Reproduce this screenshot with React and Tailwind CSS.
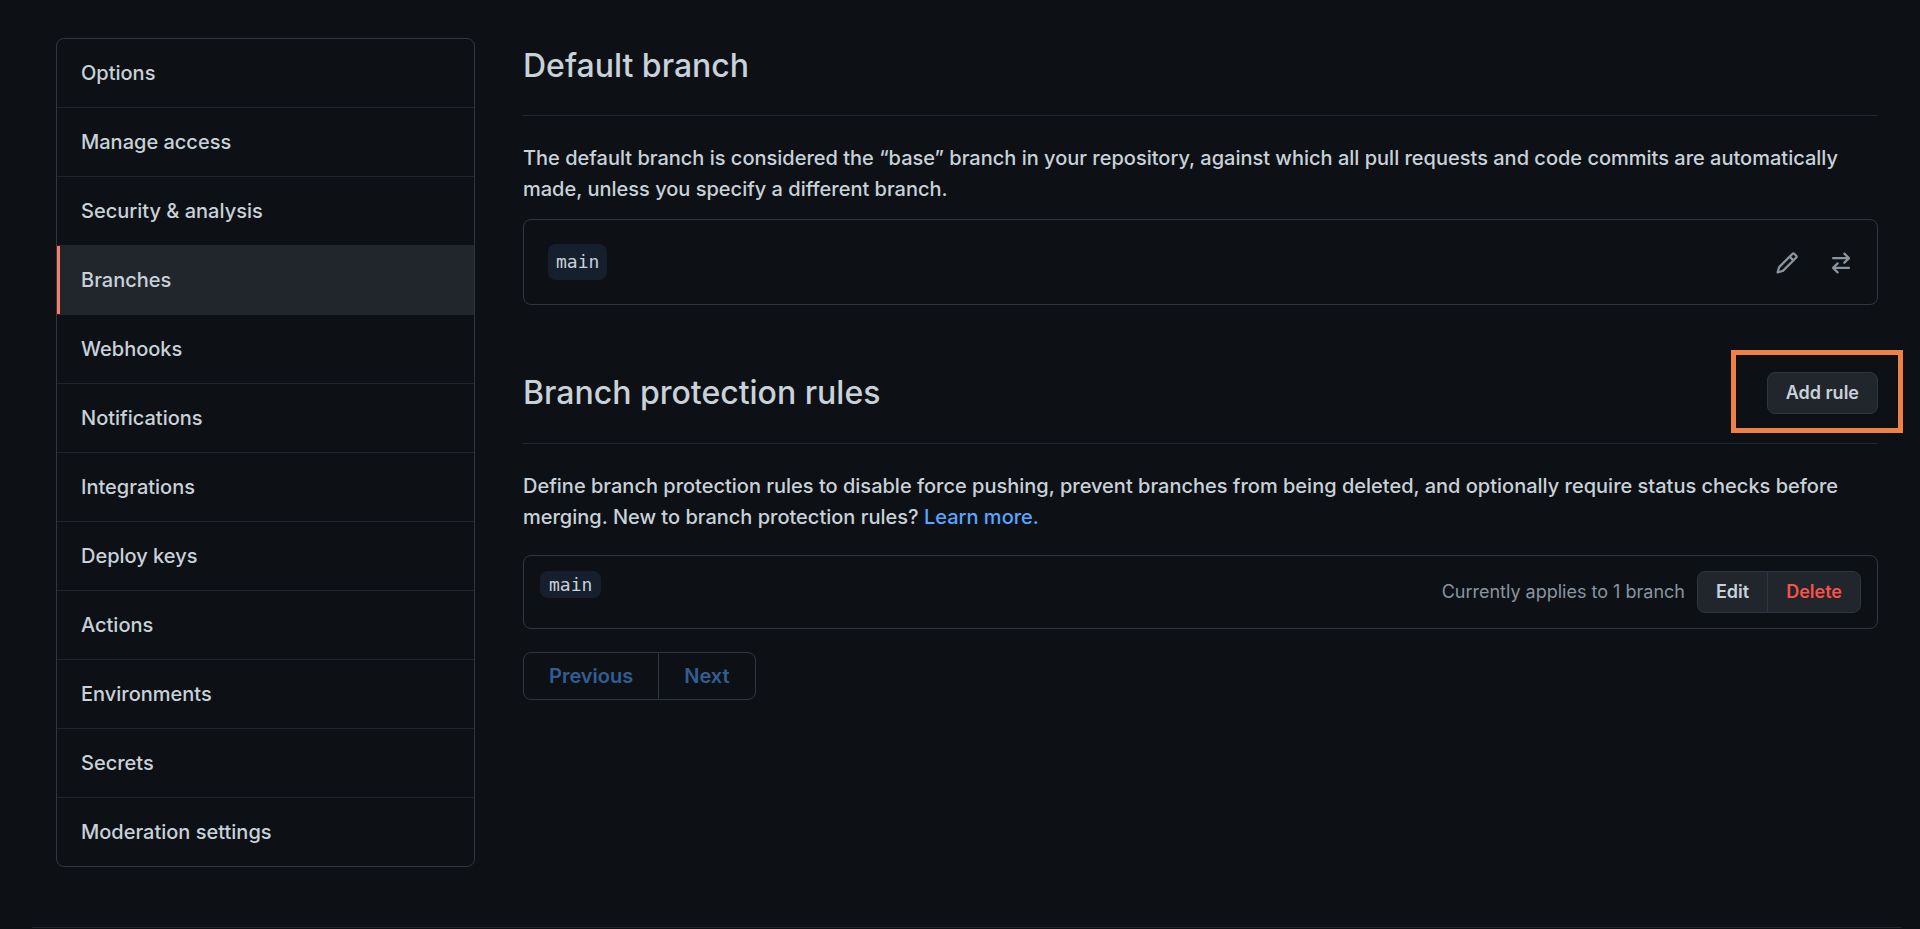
const navItems = [
  "Options",
  "Manage access",
  "Security & analysis",
  "Branches",
  "Webhooks",
  "Notifications",
  "Integrations",
  "Deploy keys",
  "Actions",
  "Environments",
  "Secrets",
  "Moderation settings",
];

function PencilIcon() {
  return (
    <svg viewBox="0 0 16 16" className="size-6 fill-current" aria-hidden="true">
      <path
        fillRule="evenodd"
        d="M11.013 1.427a1.75 1.75 0 012.474 0l1.086 1.086a1.75 1.75 0 010 2.474l-8.61 8.61c-.21.21-.47.364-.756.445l-3.251.93a.75.75 0 01-.927-.928l.929-3.25a1.75 1.75 0 01.445-.758l8.61-8.61zm1.414 1.06a.25.25 0 00-.354 0L10.811 3.75l1.439 1.44 1.263-1.263a.25.25 0 000-.354l-1.086-1.086zM11.189 6.25L9.75 4.81l-6.286 6.287a.25.25 0 00-.064.108l-.558 1.953 1.953-.558a.249.249 0 00.108-.064l6.286-6.286z"
      />
    </svg>
  );
}

function SwitchIcon() {
  return (
    <svg viewBox="0 0 16 16" className="size-6 fill-current" aria-hidden="true">
      <path
        fillRule="evenodd"
        d="M5.22 14.78a.75.75 0 001.06-1.06L4.56 12h8.69a.75.75 0 000-1.5H4.56l1.72-1.72a.75.75 0 00-1.06-1.06l-3 3a.75.75 0 000 1.06l3 3zm5.56-6.5a.75.75 0 11-1.06-1.06l1.72-1.72H2.75a.75.75 0 010-1.5h8.69L9.72 2.28a.75.75 0 011.06-1.06l3 3a.75.75 0 010 1.06l-3 3z"
      />
    </svg>
  );
}

function SideNav() {
  return (
    <nav
      aria-label="Repository settings"
      className="w-[419px] shrink-0 self-start overflow-hidden rounded-lg border border-[#30363d]"
    >
      <ul className="divide-y divide-[#21262d]">
        {navItems.map((item) => {
          const current = item === "Branches";
          return (
            <li key={item}>
              <a
                href="#"
                aria-current={current ? "page" : undefined}
                className={
                  current
                    ? "flex h-[68px] items-center border-l-3 border-[#f78166] bg-[#21262d] pr-6 pl-[21px]"
                    : "flex h-[68px] items-center px-6"
                }
              >
                {item}
              </a>
            </li>
          );
        })}
      </ul>
    </nav>
  );
}

export default function App() {
  return (
    <div className="flex min-h-screen flex-col bg-[#0d1115] pr-[18px] pb-0.5 pl-8 font-['Inter',sans-serif] text-xl leading-8 font-medium text-[#c9d1d9]">
      <div className="flex grow gap-12 border-b border-[#21262d] px-6 pt-[38px] pb-[60px]">
        <SideNav />

        <main className="min-w-0 grow">
          <section>
            <h2 className="h-[78px] border-b border-[#21262d] text-[32px] leading-[56px]">
              Default branch
            </h2>
            <p className="mt-[27px] leading-[31px]">
              The default branch is considered the “base” branch in your repository, against which
              all pull requests and code commits are automatically made, unless you specify a
              different branch.
            </p>
            <div className="mt-3.5 flex h-[86px] items-center justify-between rounded-lg border border-[#30363d] px-6">
              <code className="rounded-lg bg-[#161f2e] px-2 font-['DejaVu_Sans_Mono',monospace] text-lg leading-9 font-normal">
                main
              </code>
              <div className="flex gap-[30px] pt-0.5 text-[#8b949e]">
                <button type="button" aria-label="Rename branch">
                  <PencilIcon />
                </button>
                <button type="button" aria-label="Switch to another branch">
                  <SwitchIcon />
                </button>
              </div>
            </div>
          </section>

          <section className="mt-11">
            <div className="flex h-[95px] items-center justify-between border-b border-[#21262d] pb-1.5">
              <h2 className="text-[32px] leading-[56px]">Branch protection rules</h2>
              <div className="relative flex">
                <button
                  type="button"
                  className="h-[42px] rounded-lg border border-[#30363d] bg-[#21262d] px-[18px] text-lg leading-6 font-semibold"
                >
                  Add rule
                </button>
                <div className="pointer-events-none absolute -top-[22px] -right-[25px] -bottom-[19px] -left-9 border-5 border-[#ee8146]" />
              </div>
            </div>
            <p className="mt-[27px] leading-[31px]">
              Define branch protection rules to disable force pushing, prevent branches from being
              deleted, and optionally require status checks before merging. New to branch protection
              rules?{" "}
              <a href="#" className="text-[#58a6ff]">
                Learn more.
              </a>
            </p>
            <div className="mt-[22px] flex h-[74px] items-center justify-between rounded-lg border border-[#30363d] px-4">
              <code className="mt-[15px] self-start rounded-lg bg-[#161f2e] px-[9px] font-['DejaVu_Sans_Mono',monospace] text-lg leading-[27px] font-normal">
                main
              </code>
              <div className="flex items-center gap-3 text-lg leading-6">
                <span className="font-normal text-[#8b949e]">Currently applies to 1 branch</span>
                <div className="flex h-[42px] divide-x divide-[#30363d] overflow-hidden rounded-lg border border-[#30363d] bg-[#21262d] font-semibold">
                  <button type="button" className="px-[18px]">
                    Edit
                  </button>
                  <button type="button" className="px-[18px] text-[#f85149]">
                    Delete
                  </button>
                </div>
              </div>
            </div>
            <div className="mt-[23px] flex h-12 w-fit divide-x divide-[#30363d] rounded-lg border border-[#30363d] font-semibold text-[#335d92]">
              <button type="button" className="px-[25px]">
                Previous
              </button>
              <button type="button" className="px-[25px]">
                Next
              </button>
            </div>
          </section>
        </main>
      </div>
    </div>
  );
}
